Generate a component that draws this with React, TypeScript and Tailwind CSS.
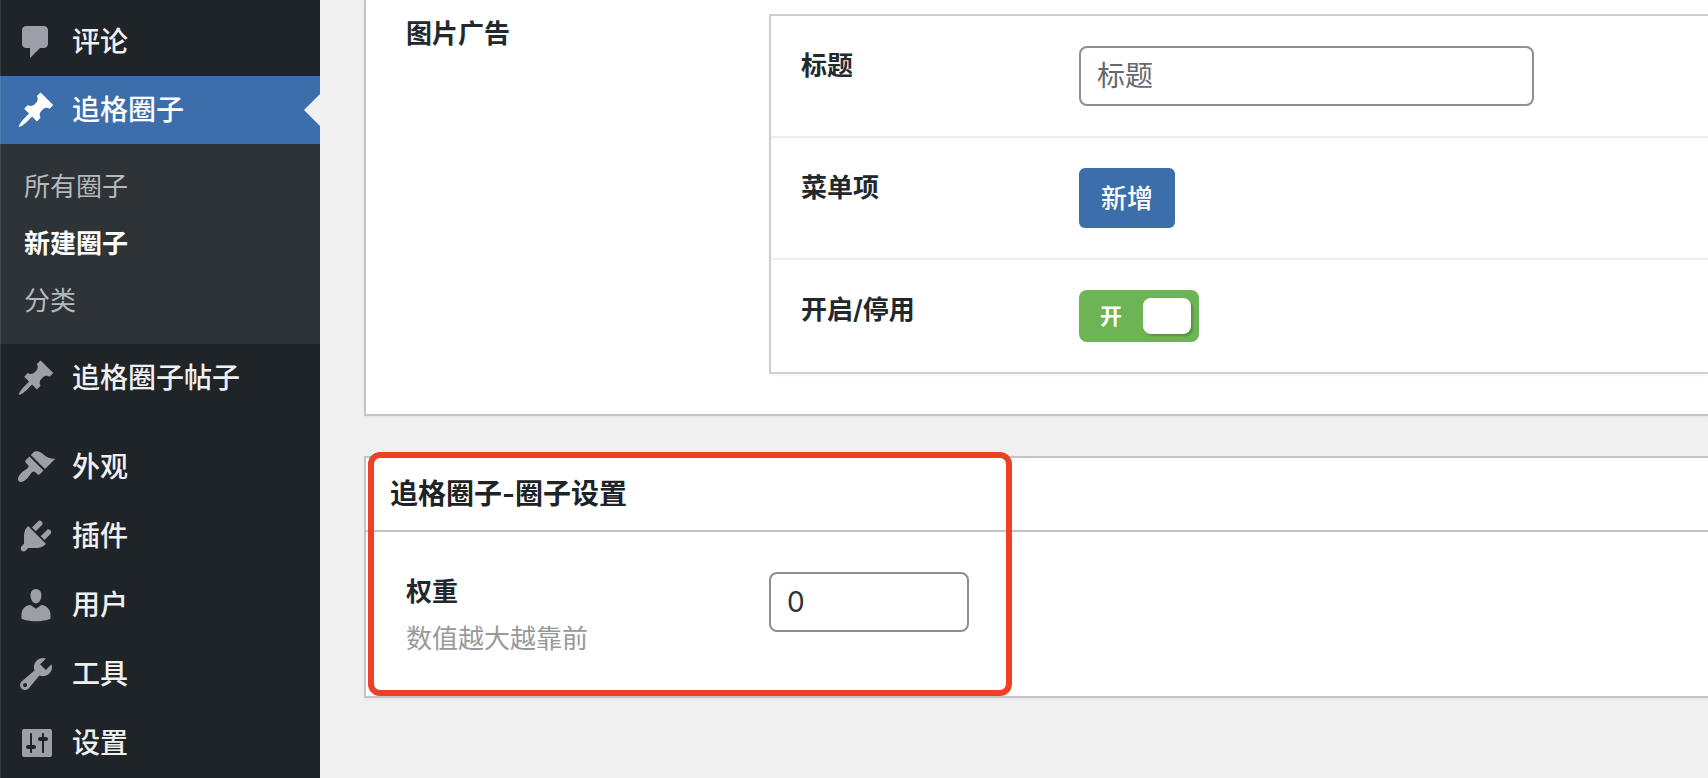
import type { ReactNode } from 'react';

const ICONS = {
  comments:
    'M5 2h9c1.1 0 2 .9 2 2v7c0 1.1-.9 2-2 2h-2l-5 5v-5H5c-1.1 0-2-.9-2-2V4c0-1.1.9-2 2-2z',
  pin: 'M10.44 3.02l1.82-1.82 6.36 6.35-1.83 1.82c-1.05-.68-2.48-.57-3.41.36l-.75.75c-.92.93-1.04 2.35-.35 3.41l-1.83 1.82-2.41-2.41-2.8 2.79c-.42.42-3.38 2.71-3.8 2.29s1.86-3.39 2.28-3.81l2.79-2.79L4.1 9.36l1.83-1.82c1.05.69 2.48.57 3.4-.36l.75-.75c.93-.92 1.05-2.35.36-3.41z',
  brush:
    'M14.48 11.06L7.41 3.99l1.5-1.5c.5-.56 2.3-.47 3.51.32 1.21.8 1.43 1.28 2.91 2.1 1.18.64 2.45 1.26 4.45.85zm-.71.71L6.7 4.7 4.93 6.47c-.39.39-.39 1.02 0 1.41l1.06 1.06c.39.39.39 1.03 0 1.42-.6.6-1.43 1.11-2.21 1.69-.35.26-.7.53-1.01.84C1.43 14.23.4 16.08 1.4 17.07c.99 1 2.84-.03 4.18-1.36.31-.31.58-.66.85-1.02.57-.78 1.08-1.61 1.69-2.21.39-.39 1.02-.39 1.41 0l1.06 1.06c.39.39 1.02.39 1.41 0z',
  plug: 'M13.11 4.36L9.87 7.6 8 5.73l3.24-3.24c.35-.34 1.05-.2 1.56.32.52.51.66 1.21.31 1.55zm-8 1.77l.91-1.12 9.01 9.01-1.19.84c-.71.71-2.63 1.16-3.82 1.16H6.14L4.9 17.26c-.59.59-1.54.59-2.12 0-.59-.58-.59-1.53 0-2.12l1.24-1.24v-3.88c0-1.13.4-3.19 1.09-3.89zm7.26 3.97l3.24-3.24c.34-.35 1.04-.21 1.55.31.52.51.66 1.21.31 1.55l-3.24 3.25z',
  user: 'M10 9.25c-2.27 0-2.73-3.44-2.73-3.44C7 4.02 7.82 2 9.97 2c2.16 0 2.98 2.02 2.71 3.81 0 0-.41 3.44-2.68 3.44zm0 2.57L12.72 10c2.39 0 4.52 2.33 4.52 4.53v2.49s-3.65 1.13-7.24 1.13c-3.65 0-7.24-1.13-7.24-1.13v-2.49c0-2.25 1.94-4.48 4.47-4.48z',
  wrench:
    'M16.68 9.77c-1.34 1.34-3.3 1.67-4.95.99l-5.41 6.52c-.99.99-2.59.99-3.58 0s-.99-2.59 0-3.57l6.52-5.42c-.68-1.65-.35-3.61.99-4.95 1.28-1.28 3.12-1.62 4.72-1.06l-2.89 2.89 2.82 2.82 2.86-2.87c.53 1.58.18 3.39-1.08 4.65zM3.81 16.21c.4.39 1.04.39 1.43 0 .4-.4.4-1.04 0-1.43-.39-.4-1.03-.4-1.43 0-.39.39-.39 1.03 0 1.43z',
  sliders:
    'M18 16V4c0-.55-.45-1-1-1H4c-.55 0-1 .45-1 1v12c0 .55.45 1 1 1h13c.55 0 1-.45 1-1zM8 11h1c.55 0 1 .45 1 1s-.45 1-1 1H8v1.5c0 .28-.22.5-.5.5s-.5-.22-.5-.5V13H6c-.55 0-1-.45-1-1s.45-1 1-1h1V5.5c0-.28.22-.5.5-.5s.5.22.5.5V11zm5-2h-1c-.55 0-1-.45-1-1s.45-1 1-1h1V5.5c0-.28.22-.5.5-.5s.5.22.5.5V7h1c.55 0 1 .45 1 1s-.45 1-1 1h-1v5.5c0 .28-.22.5-.5.5s-.5-.22-.5-.5V9z',
};

type IconName = keyof typeof ICONS;

function MenuIcon({ name }: { name: IconName }) {
  return (
    <svg viewBox="0 0 20 20" className="size-10 shrink-0" fill="currentColor" fillRule="evenodd" aria-hidden="true">
      <path d={ICONS[name]} />
    </svg>
  );
}

function MenuItem({ icon, children, current = false }: { icon: IconName; children: ReactNode; current?: boolean }) {
  return (
    <li className={current ? 'relative bg-[#3c6eab]' : 'relative'}>
      <a href="#" className="flex h-17 items-center gap-4 pl-4 text-[28px] font-medium">
        <span className={current ? 'text-white' : 'text-[#9ca0a6]'}>
          <MenuIcon name={icon} />
        </span>
        <span className={current ? 'text-white' : 'text-[#f0f0f1]'}>{children}</span>
      </a>
      {current && (
        <svg viewBox="0 0 16 32" className="absolute top-[18px] right-0 h-8 w-4" aria-hidden="true">
          <path d="M16 0v32L0 16z" fill="#f0f0f0" />
        </svg>
      )}
    </li>
  );
}

function SubItem({ children, current = false }: { children: ReactNode; current?: boolean }) {
  return (
    <li>
      <a
        href="#"
        className={
          current
            ? 'flex h-[57px] items-center pl-6 text-[26px] font-semibold text-white'
            : 'flex h-[57px] items-center pl-6 text-[26px] text-[#b4b9be]'
        }
      >
        {children}
      </a>
    </li>
  );
}

function FieldRow({ label, htmlFor, children }: { label: string; htmlFor: string; children: ReactNode }) {
  return (
    <div className="flex items-start p-[30px]">
      <label htmlFor={htmlFor} className="w-[278px] shrink-0 text-[26px] leading-[39px] font-semibold">
        {label}
      </label>
      {children}
    </div>
  );
}

function Sidebar() {
  return (
    <nav className="relative w-80 shrink-0 bg-[#1f2428] pt-2">
      <ul>
        <MenuItem icon="comments">评论</MenuItem>
        <MenuItem icon="pin" current>
          追格圈子
        </MenuItem>
        <li className="bg-[#2e3337] pt-3.5 pb-[15px]">
          <ul>
            <SubItem>所有圈子</SubItem>
            <SubItem current>新建圈子</SubItem>
            <SubItem>分类</SubItem>
          </ul>
        </li>
        <MenuItem icon="pin">追格圈子帖子</MenuItem>
      </ul>
      <ul className="flex flex-col gap-px pt-[21px]">
        <MenuItem icon="brush">外观</MenuItem>
        <MenuItem icon="plug">插件</MenuItem>
        <MenuItem icon="user">用户</MenuItem>
        <MenuItem icon="wrench">工具</MenuItem>
        <MenuItem icon="sliders">设置</MenuItem>
      </ul>
      <div className="pointer-events-none absolute inset-y-0 left-0 w-px bg-white/10" />
    </nav>
  );
}

export default function App() {
  return (
    <div className="flex min-h-screen bg-[#f0f0f0] font-['Inter','Noto_Sans_CJK_SC',sans-serif] text-[#23282d]">
      <Sidebar />
      <main className="flex min-w-0 grow flex-col gap-10 pl-11">
        <section className="flex items-start border-b-2 border-l-2 border-[#c3c4c7] bg-white pt-3.5 pb-10 pl-10 shadow-[0_2px_2px_rgba(0,0,0,0.04)]">
          <h3 className="w-[363px] shrink-0 text-[26px] leading-[39px] font-semibold">图片广告</h3>
          <div className="grow divide-y-2 divide-[#eeeeee] border-y-2 border-l-2 border-[#ccd0d4] shadow-[0_2px_2px_rgba(0,0,0,0.04)]">
            <FieldRow label="标题" htmlFor="ad-title">
              <input
                id="ad-title"
                type="text"
                placeholder="标题"
                className="h-15 w-[455px] rounded-lg border-2 border-[#8c8f94] bg-white px-4 text-[28px] placeholder:text-[#646970]"
              />
            </FieldRow>
            <FieldRow label="菜单项" htmlFor="ad-add">
              <button
                id="ad-add"
                type="button"
                className="h-15 w-24 rounded-md bg-[#3c6eab] text-[26px] font-medium text-white"
              >
                新增
              </button>
            </FieldRow>
            <FieldRow label="开启/停用" htmlFor="ad-enabled">
              <span className="relative flex h-13 w-30 items-center justify-between rounded-lg bg-[#6db455] pr-2 pl-[21px]">
                <input
                  id="ad-enabled"
                  type="checkbox"
                  role="switch"
                  defaultChecked
                  className="absolute inset-0 size-full cursor-pointer appearance-none"
                />
                <span className="text-[22px] font-semibold text-white">开</span>
                <span className="h-9 w-12 rounded-lg bg-white shadow-[2px_2px_2px_rgba(0,0,0,0.2)]" />
              </span>
            </FieldRow>
          </div>
        </section>

        <section className="relative border-y-2 border-l-2 border-[#c3c4c7] bg-white shadow-[0_2px_2px_rgba(0,0,0,0.04)]">
          <h2 className="flex h-[74px] items-center border-b-2 border-[#c3c4c7] pl-6 text-[28px] font-semibold text-[#1d2327]">
            追格圈子-圈子设置
          </h2>
          <div className="flex items-start py-10 pl-10">
            <div className="w-[363px] shrink-0 text-[26px]">
              <label htmlFor="weight" className="block leading-[39px] font-semibold">
                权重
              </label>
              <p className="mt-2.5 leading-[35px] text-[#999999]">数值越大越靠前</p>
            </div>
            <input
              id="weight"
              type="text"
              inputMode="numeric"
              defaultValue="0"
              className="h-15 w-50 rounded-lg border-2 border-[#8c8f94] bg-white px-4 text-[28px] text-[#2c3338]"
            />
          </div>
          <div className="pointer-events-none absolute -top-1.5 bottom-0 left-0.5 w-[644px] rounded-xl border-6 border-[#ec4125]" />
        </section>
      </main>
    </div>
  );
}
